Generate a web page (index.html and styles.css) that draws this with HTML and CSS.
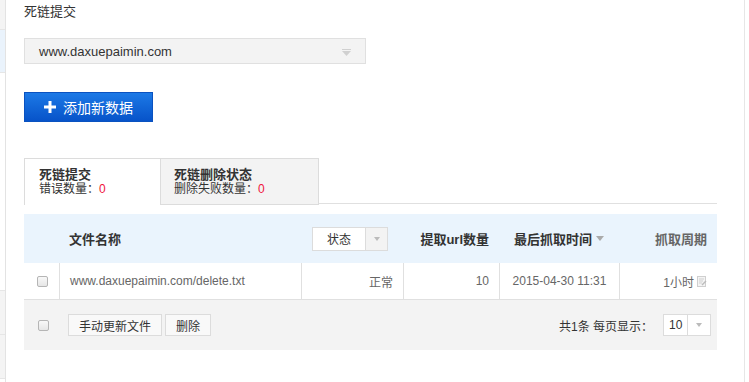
FILE: index.html
```html
<!DOCTYPE html>
<html>
<head>
<meta charset="utf-8">
<link rel="stylesheet" href="styles.css">
</head>
<body>
<div class="page">
  <div class="side">
    <div class="side-a"></div>
    <div class="side-b"></div>
    <div class="side-c"></div>
    <div class="side-d"></div>
    <div class="side-e"></div>
  </div>
  <div class="main">
    <div class="title">死链提交</div>
    <div class="site-select">
      <span>www.daxuepaimin.com</span>
      <svg class="sel-arrow" width="9" height="7" viewBox="0 0 9 7"><rect x="0" y="0" width="9" height="1" fill="#d0d0d0"/><path d="M0 2 H9 L4.5 7 Z" fill="#d0d0d0"/></svg>
    </div>
    <button class="add-btn">
      <svg width="12" height="12" viewBox="0 0 12 12"><rect x="4.5" y="0" width="3" height="12" fill="#fff"/><rect x="0" y="4.5" width="12" height="3" fill="#fff"/></svg>
      <span>添加新数据</span>
    </button>
    <div class="tabs">
      <div class="tab active">
        <div class="tab-title">死链提交</div>
        <div class="tab-sub">错误数量：<span class="red">0</span></div>
      </div>
      <div class="tab">
        <div class="tab-title">死链删除状态</div>
        <div class="tab-sub">删除失败数量：<span class="red">0</span></div>
      </div>
      <div class="tab-fill"></div>
    </div>
    <div class="grid head">
      <div class="c"></div>
      <div class="c name">文件名称</div>
      <div class="c status">
        <div class="st-select"><span class="st-text">状态</span><span class="st-arrow"><i class="tri"></i></span></div>
      </div>
      <div class="c right">提取url数量</div>
      <div class="c center">最后抓取时间 <i class="tri dark"></i></div>
      <div class="c right period">抓取周期</div>
    </div>
    <div class="grid row">
      <div class="c cb"><span class="check"></span></div>
      <div class="c name sep">www.daxuepaimin.com/delete.txt</div>
      <div class="c right sep">正常</div>
      <div class="c right sep">10</div>
      <div class="c center sep">2015-04-30 11:31</div>
      <div class="c right sep">1小时<svg class="edit" width="10" height="11" viewBox="0 0 10 11"><rect x="0.5" y="0.5" width="8" height="10" fill="#f4f4f4" stroke="#cfcfcf"/><path d="M2 3 H7 M2 5 H6 M2 7 H5" stroke="#cfcfcf"/><path d="M5 9 L9 5" stroke="#bbb" stroke-width="1.5"/></svg></div>
    </div>
    <div class="foot">
      <div class="foot-left">
        <span class="check"></span>
        <button class="btn first">手动更新文件</button>
        <button class="btn">删除</button>
      </div>
      <div class="foot-right">
        <span>共1条 每页显示：</span>
        <div class="pg-select"><span class="pg-text">10</span><span class="pg-arrow"><i class="tri"></i></span></div>
      </div>
    </div>
  </div>
</div>
</body>
</html>
```
FILE: styles.css
```css
* { box-sizing: border-box; }
html, body { margin: 0; padding: 0; background: #fff; }
body {
  font-family: "Liberation Sans", "Noto Sans CJK SC", sans-serif;
  font-size: 12px;
  color: #333;
  width: 749px;
  height: 382px;
  overflow: hidden;
}
.page { display: flex; height: 382px; }
.side {
  width: 6px;
  border-right: 1px solid #e3e3e3;
  display: flex;
  flex-direction: column;
}
.side-a { height: 30px; background: #f4f4f4; border-bottom: 1px solid #e6e6e6; }
.side-b { height: 43px; background: #eaf3fc; border-bottom: 1px solid #e6e6e6; }
.side-c { height: 218px; background: #fff; border-bottom: 1px solid #e6e6e6; }
.side-d { height: 44px; background: #f4f4f4; border-bottom: 1px solid #e6e6e6; }
.side-e { height: 44px; background: #f4f4f4; border-bottom: 1px solid #e6e6e6; }

.main {
  width: 739px;
  border-right: 1px solid #e6e6e6;
  padding-left: 18px;
}
.title {
  height: 24px;
  line-height: 24px;
  font-size: 13px;
  color: #333;
}
.site-select {
  margin-top: 14px;
  width: 342px;
  height: 26px;
  background: #f3f3f3;
  border: 1px solid #e0e0e0;
  display: flex;
  align-items: center;
  justify-content: space-between;
  padding: 0 14px 0 14px;
  font-size: 13px;
  color: #333;
}
.sel-arrow { margin-top: 2px; }
.add-btn {
  margin-top: 28px;
  width: 129px;
  height: 30px;
  border: 1px solid #0a52c0;
  background: linear-gradient(#1c79e6, #0753c9);
  color: #fff;
  font-family: inherit;
  font-size: 14px;
  display: flex;
  align-items: center;
  padding: 0 0 0 19px;
  gap: 7px;
}
.tabs {
  margin-top: 36px;
  display: flex;
  height: 47px;
}
.tab {
  width: 159px;
  background: #f3f3f3;
  border: 1px solid #dcdcdc;
  padding: 9px 0 0 13px;
}
.tab.active {
  width: 136px;
  background: #fff;
  border-right: none;
  border-bottom: none;
  padding-left: 14px;
}
.tab-fill { flex: 1; margin-right: 27px; border-bottom: 1px solid #e0e0e0; height: 46px; }
.tab-title { font-size: 13px; font-weight: bold; line-height: 14px; color: #333; }
.tab-sub { font-size: 12px; line-height: 14px; color: #333; margin-top: 0; }
.red { color: #f0143c; }

.grid {
  display: grid;
  grid-template-columns: 35px 242px 102px 96px 120px 98px;
  width: 693px;
}
.head {
  margin-top: 9px;
  height: 49px;
  background: #eaf4fd;
  font-weight: bold;
  font-size: 13px;
}
.c {
  display: flex;
  align-items: center;
  padding: 0 10px;
  white-space: nowrap;
}
.right { justify-content: flex-end; }
.center { justify-content: center; }
.status { padding-left: 11px; }
.head .period { color: #666; }
.st-select { display: flex; height: 24px; }
.st-text {
  width: 54px;
  border: 1px solid #dcdcdc;
  background: #fff;
  font-weight: normal;
  font-size: 12px;
  display: flex;
  align-items: center;
  justify-content: center;
}
.st-arrow, .pg-arrow {
  width: 22px;
  border: 1px solid #dcdcdc;
  border-left: none;
  background: #f3f3f3;
  display: flex;
  align-items: center;
  justify-content: center;
}
.tri {
  display: inline-block;
  width: 0; height: 0;
  border-left: 3px solid transparent;
  border-right: 3px solid transparent;
  border-top: 4px solid #bbb;
}
.tri.dark { border-left-width: 4px; border-right-width: 4px; border-top-width: 5px; border-top-color: #aaa; margin-left: 4px; }
.row {
  height: 37px;
  border-bottom: 1px solid #e0e0e0;
  color: #666;
  font-size: 12px;
}
.sep { border-left: 1px solid #e0e0e0; }
.cb { justify-content: center; padding: 0 0 0 2px; }
.edit { margin-left: 3px; }
.check {
  display: inline-block;
  width: 11px;
  height: 11px;
  border: 1px solid #b5b5b5;
  border-radius: 2px;
  background: linear-gradient(#f8f8f8, #e6e6e6);
}
.foot {
  width: 693px;
  height: 50px;
  background: #f3f3f3;
  display: flex;
  align-items: center;
  justify-content: space-between;
  padding: 0 6px 0 14px;
}
.foot-left { display: flex; align-items: center; }
.btn {
  height: 22px;
  padding: 0 10px;
  border: 1px solid #dcdcdc;
  background: #f9f9f9;
  font-family: inherit;
  font-size: 12px;
  color: #333;
  margin-left: 3px;
}
.btn.first { margin-left: 19px; }
.foot-right { display: flex; align-items: center; color: #333; }
.pg-select { display: flex; height: 22px; margin-left: 10px; }
.pg-text {
  width: 25px;
  border: 1px solid #dcdcdc;
  background: #fff;
  padding-left: 5px;
  display: flex;
  align-items: center;
  font-size: 12px;
}
.pg-arrow { width: 23px; background: #fff; }
```
